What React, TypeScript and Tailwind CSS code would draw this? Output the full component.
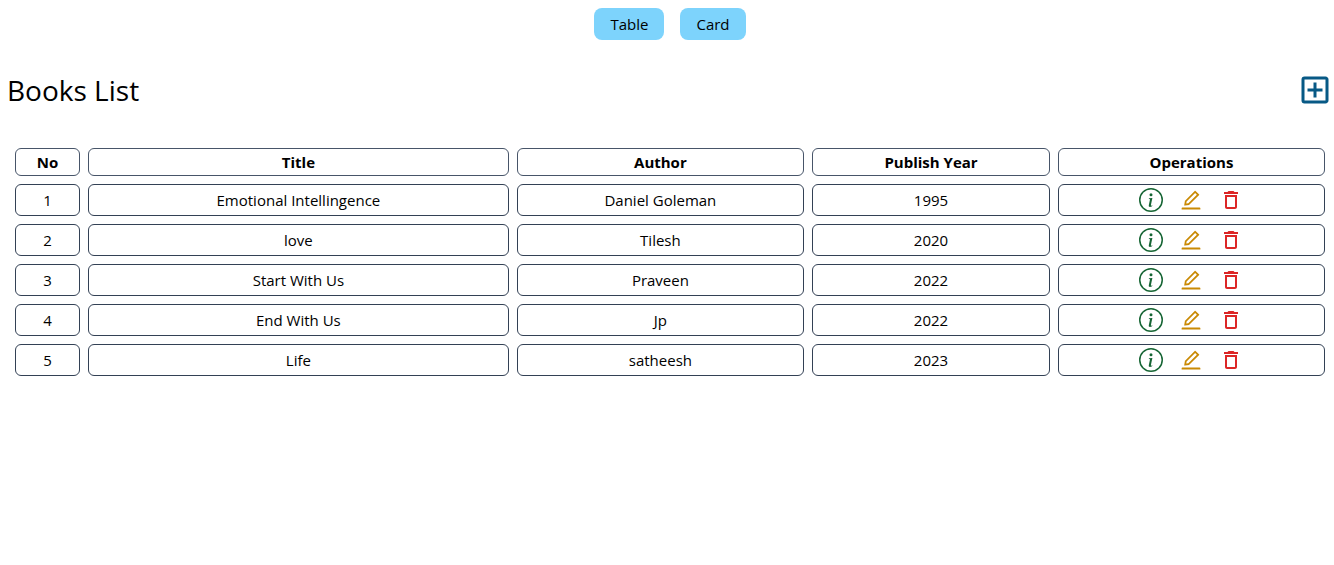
import { BsInfoCircle } from 'react-icons/bs';
import { AiOutlineEdit } from 'react-icons/ai';
import { MdOutlineAddBox, MdOutlineDelete } from 'react-icons/md';

const books = [
  { title: 'Emotional Intellingence', author: 'Daniel Goleman', year: 1995 },
  { title: 'love', author: 'Tilesh', year: 2020 },
  { title: 'Start With Us', author: 'Praveen', year: 2022 },
  { title: 'End With Us', author: 'Jp', year: 2022 },
  { title: 'Life', author: 'satheesh', year: 2023 },
];

const headClass = 'rounded-md border border-[#475569] p-px font-bold';
const cellClass = 'rounded-md border border-[#334155] p-px text-center';
const modeClass = 'rounded-lg bg-[#7dd3fc] px-4 py-1';

export default function App() {
  return (
    <div className="py-2 pr-px pl-[7px] font-['Open_Sans','Noto_Sans',sans-serif] text-[15px] leading-6 text-black">
      <div className="flex items-center justify-center gap-x-4">
        <button type="button" className={modeClass}>Table</button>
        <button type="button" className={modeClass}>Card</button>
      </div>
      <div className="flex items-center justify-between">
        <h1 className="my-8 text-[28px] leading-9">Books List</h1>
        <a href="#create" aria-label="Add book">
          <MdOutlineAddBox className="text-4xl text-[#075985]" />
        </a>
      </div>
      <table className="w-full table-fixed border-separate border-spacing-2">
        <colgroup>
          <col className="w-[5.1%]" />
          <col className="w-[32.9%]" />
          <col className="w-[22.5%]" />
          <col className="w-[18.6%]" />
          <col className="w-[20.9%]" />
        </colgroup>
        <thead>
          <tr>
            <th className={headClass}>No</th>
            <th className={headClass}>Title</th>
            <th className={headClass}>Author</th>
            <th className={headClass}>Publish Year</th>
            <th className={headClass}>Operations</th>
          </tr>
        </thead>
        <tbody>
          {books.map((book, i) => (
            <tr key={book.title} className="h-8">
              <td className={cellClass}>{i + 1}</td>
              <td className={cellClass}>{book.title}</td>
              <td className={cellClass}>{book.author}</td>
              <td className={cellClass}>{book.year}</td>
              <td className={cellClass}>
                <div className="flex justify-center gap-x-4">
                  <a href="#details" aria-label="Details"><BsInfoCircle className="text-2xl text-[#166534]" /></a>
                  <a href="#edit" aria-label="Edit"><AiOutlineEdit className="text-2xl text-[#ca8a04]" /></a>
                  <a href="#delete" aria-label="Delete"><MdOutlineDelete className="text-2xl text-[#dc2626]" /></a>
                </div>
              </td>
            </tr>
          ))}
        </tbody>
      </table>
    </div>
  );
}
